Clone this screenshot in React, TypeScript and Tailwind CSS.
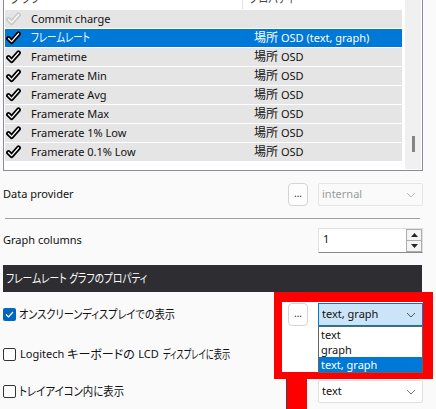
import React, { useLayoutEffect, useRef, useState } from "react";

const rows = [
  { name: "Commit charge", prop: "", dim: true },
  { name: "フレームレート", prop: "OSD (text, graph)", sel: true },
  { name: "Frametime", prop: "OSD" },
  { name: "Framerate Min", prop: "OSD" },
  { name: "Framerate Avg", prop: "OSD" },
  { name: "Framerate Max", prop: "OSD" },
  { name: "Framerate 1% Low", prop: "OSD" },
  { name: "Framerate 0.1% Low", prop: "OSD" },
];

// Japanese run squeezed to the width it takes in the narrow UI font
const Sq = ({ w, cls, children }: { w: number; cls: string; children: React.ReactNode }) => {
  const ref = useRef<HTMLSpanElement>(null);
  const [s, setS] = useState(1);
  useLayoutEffect(() => {
    const fit = () => {
      const el = ref.current;
      if (el && el.offsetWidth) setS(w / el.offsetWidth);
    };
    fit();
    document.fonts?.ready.then(fit);
  }, [w]);
  return (
    <span className={`inline-block whitespace-nowrap ${cls}`}>
      <span
        ref={ref}
        className="inline-block origin-left whitespace-nowrap text-[12px] [font-feature-settings:'palt']"
        style={{ transform: `scaleX(${s})` }}
      >
        {children}
      </span>
    </span>
  );
};

const Tick = ({ dim }: { dim?: boolean }) => (
  <svg width="15" height="14" viewBox="0 0 15 14">
    <path d="M2.5 7.5 L5.6 10.6 L12.5 2.8" fill="none" stroke={dim ? "#cacaca" : "#000"} strokeWidth="4.8" strokeLinecap="round" strokeLinejoin="round" />
    <path d="M2.5 7.5 L5.6 10.6 L12.5 2.8" fill="none" stroke="#fff" strokeWidth="1.3" strokeLinecap="round" strokeLinejoin="round" />
  </svg>
);

const Chevron = ({ color = "#777" }: { color?: string }) => (
  <svg width="10" height="6" viewBox="0 0 10 6">
    <path d="M1 1 L5 5 L9 1" fill="none" stroke={color} strokeWidth="1" />
  </svg>
);

const Dots = () => (
  <div className="w-[20px] h-[23px] rounded-[4px] border border-[#d4d4d4] bg-[#fdfdfd] flex items-center justify-center text-[10px] text-[#333] pb-[2px]">
    ...
  </div>
);

const Box = ({ on }: { on?: boolean }) =>
  on ? (
    <div className="w-[13px] h-[13px] rounded-[2px] bg-[#0067c0] flex items-center justify-center">
      <svg width="9" height="7" viewBox="0 0 9 7">
        <path d="M1 3.5 L3.5 6 L8 1" fill="none" stroke="#fff" strokeWidth="1.2" />
      </svg>
    </div>
  ) : (
    <div className="w-[13px] h-[13px] rounded-[2px] border border-[#333] bg-white" />
  );

export default function App() {
  return (
    <div className="relative w-[436px] h-[409px] overflow-hidden bg-[#fafafa] text-[11px] text-[#111] [font-family:'Noto_Sans','Noto_Sans_CJK_JP',sans-serif]">
      {/* sensor list */}
      <div className="-mt-[15px] ml-[3px] w-[420px] h-[186px] border border-[#8a8a98] bg-white flex">
        <div className="w-[401px] pl-px pr-[3px] pt-px flex flex-col gap-px">
          <div className="h-[22px] flex bg-white text-[#444]">
            <div className="w-[238px] border-r border-[#e3e3e3] pl-[5px] pt-[3px]">
              <Sq w={30} cls="w-[30px]">グラフ</Sq>
            </div>
            <div className="pl-[6px] pt-[3px]">
              <Sq w={46} cls="w-[46px]">プロパティ</Sq>
            </div>
          </div>
          {rows.map((r) => (
            <div
              key={r.name}
              className={`h-[18px] flex items-center ${r.sel ? "bg-[#0078d7] text-white" : "bg-[#e5e5e5]"}`}
            >
              <div className="w-[26px] pl-[1px] flex items-center">
                <Tick dim={r.dim} />
              </div>
              <div className="w-[223px] whitespace-nowrap">
                {r.name === "フレームレート" ? <Sq w={59} cls="w-[59px]">{r.name}</Sq> : r.name}
              </div>
              <div className="whitespace-nowrap">
                {r.prop && (
                  <>
                    <span className="text-[12px]">場所</span> {r.prop}
                  </>
                )}
              </div>
            </div>
          ))}
        </div>
        <div className="w-[16px] my-px bg-[#f0f0f0] flex flex-col">
          <div className="mt-[149px] ml-[7px] w-[3px] h-[16px] bg-[#858585]" />
        </div>
      </div>

      {/* data provider */}
      <div className="mt-[12px] h-[23px] flex items-center pl-[3px] pr-[13px]">
        <div className="flex-1">Data provider</div>
        <Dots />
        <div className="ml-[10px] w-[105px] h-[23px] border border-[#e6e6e6] bg-[#fafafa] rounded-[2px] flex items-center justify-between pl-[3px] pr-[6px] text-[#9a9a9a]">
          internal
          <Chevron color="#bbb" />
        </div>
      </div>

      <div className="mt-[12px] ml-[5px] w-[415px] h-px bg-[#a0a0a0]" />

      {/* graph columns */}
      <div className="mt-[9px] h-[25px] flex items-center pl-[3px] pr-[13px]">
        <div className="flex-1">Graph columns</div>
        <div className="w-[105px] h-[25px] border border-[#e0e0e0] border-b-[#8a8a8a] bg-white flex items-stretch">
          <div className="flex-1 pl-[4px] pt-[2px]">1</div>
          <div className="w-[16px] flex flex-col border border-[#adadad] bg-[#f3f3f3]">
            <div className="flex-1 flex items-center justify-center border-b border-[#adadad]">
              <svg width="7" height="4" viewBox="0 0 7 4"><path d="M0 4 L3.5 0 L7 4 Z" fill="#222" /></svg>
            </div>
            <div className="flex-1 flex items-center justify-center">
              <svg width="7" height="4" viewBox="0 0 7 4"><path d="M0 0 L3.5 4 L7 0 Z" fill="#222" /></svg>
            </div>
          </div>
        </div>
      </div>

      {/* section header */}
      <div className="mt-[12px] ml-[3px] w-[419px] h-[27px] bg-[#2e2e32] text-white flex items-center pl-[3px]">
        <Sq w={141} cls="w-[141px]">フレームレート グラフのプロパティ</Sq>
      </div>

      {/* OSD */}
      <div className="mt-[11px] h-[23px] flex items-center gap-[3px] pl-[3px]">
        <Box on />
        <Sq w={156} cls="w-[156px]">オンスクリーンディスプレイでの表示</Sq>
      </div>

      {/* LCD */}
      <div className="mt-[17px] h-[23px] flex items-center pl-[3px]">
        <Box />
        <span className="ml-[4px]">Logitech</span>
        <span className="ml-[3px]">
          <Sq w={68} cls="w-[68px]">キーボードの</Sq>
        </span>
        <span className="ml-[3px]">LCD</span>
        <span className="ml-[4px]">
          <Sq w={67} cls="w-[67px]">ディスプレイに表示</Sq>
        </span>
      </div>

      {/* tray */}
      <div className="mt-[14px] h-[23px] flex items-center pl-[3px] pr-[13px]">
        <div className="flex-1 flex items-center gap-[3px]">
          <Box />
          <Sq w={105} cls="w-[105px]">トレイアイコン内に表示</Sq>
        </div>
        <div className="w-[105px] h-[23px] border border-[#e0e0e0] bg-white rounded-[2px] flex items-center justify-between pl-[3px] pr-[6px]">
          text
          <Chevron />
        </div>
      </div>

      {/* red annotation frame around the open combo */}
      <div className="absolute left-[274px] top-[292px] w-[159px] h-[87px] border-t-[10px] border-l-[8px] border-r-[10px] border-b-[7px] border-[#ff0000] bg-white">
        <div className="ml-[6px] mt-[1px]"><Dots /></div>
      </div>
      <div className="absolute left-[286px] top-[379px] w-px h-[30px] bg-[#444]" />
      <div className="absolute left-[287px] top-[379px] w-[20px] h-[30px] bg-[#ff0000]" />

      {/* open combo + list */}
      <div className="absolute left-[318px] top-[303px] w-[105px] h-[23px] border border-[#0078d7] bg-[#cce4f7] flex items-center justify-between pl-[3px] pr-[6px]">
        text, graph
        <Chevron color="#555" />
      </div>
      <div className="absolute left-[318px] top-[326px] w-[105px] h-[47px] border border-[#646464] bg-white flex flex-col leading-[15px]">
        <div className="pl-[2px]">text</div>
        <div className="pl-[2px]">graph</div>
        <div className="pl-[2px] bg-[#0078d7] text-white">text, graph</div>
      </div>
    </div>
  );
}
